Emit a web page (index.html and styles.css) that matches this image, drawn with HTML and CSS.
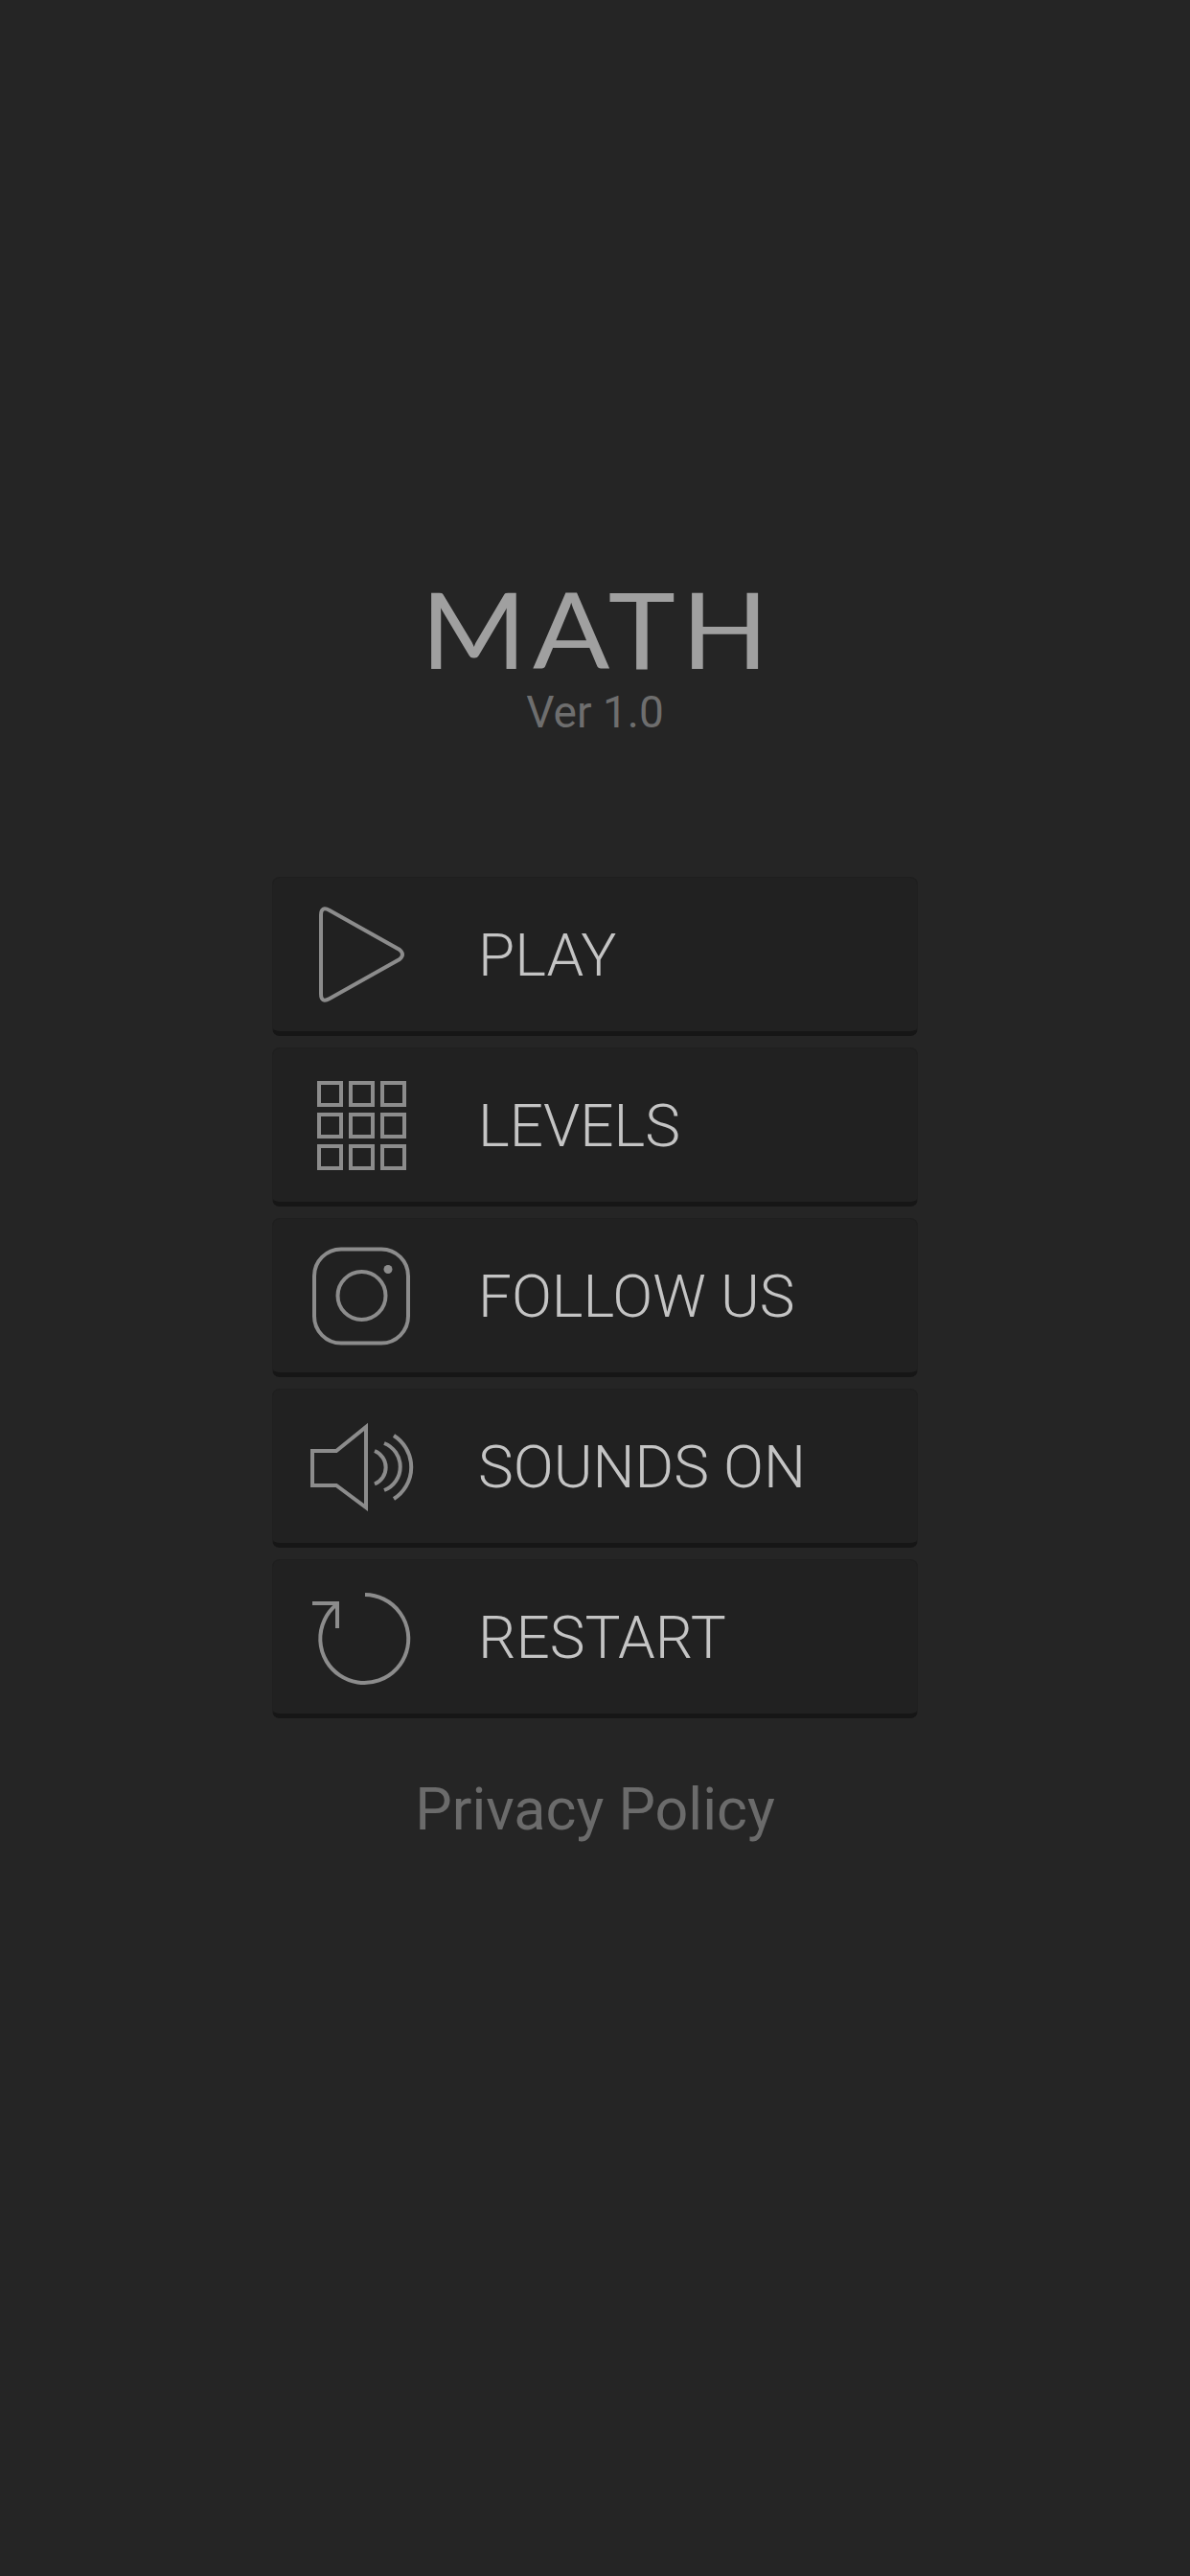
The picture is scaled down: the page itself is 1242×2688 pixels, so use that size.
FILE: index.html
```html
<!DOCTYPE html>
<html lang="en">
<head>
    <meta charset="UTF-8">
    <meta name="viewport" content="width=device-width, initial-scale=1.0">
    <title>Math</title>
    <link rel="stylesheet" href="styles.css">
</head>
<body>
    <main class="menu">
        <header class="heading">
            <h1 class="game-title">MATH</h1>
            <p class="version">Ver 1.0</p>
        </header>

        <nav class="menu-list">
            <button class="menu-button" type="button">
                <svg class="menu-icon" viewBox="0 0 120 120">
                    <path d="M18 19 Q18 9 27 14 L100 55 Q106 60 100 65 L27 106 Q18 111 18 101 Z"/>
                </svg>
                <span>PLAY</span>
            </button>
            <button class="menu-button" type="button">
                <svg class="menu-icon" viewBox="0 0 120 120">
                    <rect x="16" y="16" width="23" height="23"/>
                    <rect x="49" y="16" width="23" height="23"/>
                    <rect x="82" y="16" width="23" height="23"/>
                    <rect x="16" y="49" width="23" height="23"/>
                    <rect x="49" y="49" width="23" height="23"/>
                    <rect x="82" y="49" width="23" height="23"/>
                    <rect x="16" y="82" width="23" height="23"/>
                    <rect x="49" y="82" width="23" height="23"/>
                    <rect x="82" y="82" width="23" height="23"/>
                </svg>
                <span>LEVELS</span>
            </button>
            <button class="menu-button" type="button">
                <svg class="menu-icon" viewBox="0 0 120 120">
                    <rect x="11" y="11.5" width="98" height="98" rx="28"/>
                    <circle cx="60.5" cy="60" r="25"/>
                    <circle class="icon-dot" cx="88" cy="32.5" r="4.5"/>
                </svg>
                <span>FOLLOW US</span>
            </button>
            <button class="menu-button" type="button">
                <svg class="menu-icon" viewBox="0 0 120 120">
                    <path d="M9 44 H34 L65 19 V103 L34 80 H9 Z"/>
                    <path d="M74 44 A18.6 18.6 0 0 1 74 78.5"/>
                    <path d="M84 36 A26.3 26.3 0 0 1 84 85"/>
                    <path d="M94 28 A39 39 0 0 1 94 94"/>
                </svg>
                <span>SOUNDS ON</span>
            </button>
            <button class="menu-button" type="button">
                <svg class="menu-icon" viewBox="0 0 120 120">
                    <path d="M64 16 A46 46 0 1 1 34 26.5"/>
                    <path d="M9 25 H35 V51"/>
                </svg>
                <span>RESTART</span>
            </button>
        </nav>

        <a class="privacy-link" href="#">Privacy Policy</a>
    </main>
</body>
</html>
```

FILE: styles.css
```css
* {
    box-sizing: border-box;
}

body {
    margin: 0;
    min-height: 2688px;
    background-color: #252525;
    font-family: Roboto, "Liberation Sans", sans-serif;
}

.menu {
    display: flex;
    flex-direction: column;
    align-items: center;
    padding-top: 590px;
}

.heading {
    display: flex;
    flex-direction: column;
    align-items: center;
}

.game-title {
    margin: 0 0 0 6px;
    font-family: Lato, "Liberation Sans", sans-serif;
    font-size: 110px;
    font-weight: 400;
    line-height: 130px;
    letter-spacing: 6px;
    color: #a0a0a0;
    transform: scaleX(1.08);
}

.version {
    margin: -3px 0 0;
    font-size: 46px;
    line-height: 52px;
    color: #6e6e6e;
}

.menu-list {
    display: flex;
    flex-direction: column;
    gap: 12px;
    width: 674px;
    margin-top: 146px;
}

.menu-button {
    display: flex;
    align-items: center;
    gap: 62px;
    height: 166px;
    padding: 0 32px;
    background-color: #212121;
    border: 1px solid #1f1f1f;
    border-bottom: 5px solid #161616;
    border-radius: 8px;
    font-family: inherit;
    font-size: 62px;
    font-weight: 300;
    color: #c4c4c4;
}

.menu-icon {
    flex-shrink: 0;
    width: 120px;
    height: 120px;
    fill: none;
    stroke: #8c8c8c;
    stroke-width: 4;
}

.icon-dot {
    fill: #8c8c8c;
    stroke: none;
}

.privacy-link {
    margin-top: 60px;
    font-size: 61px;
    line-height: 70px;
    color: #6b6b6b;
    text-decoration: none;
}
```
